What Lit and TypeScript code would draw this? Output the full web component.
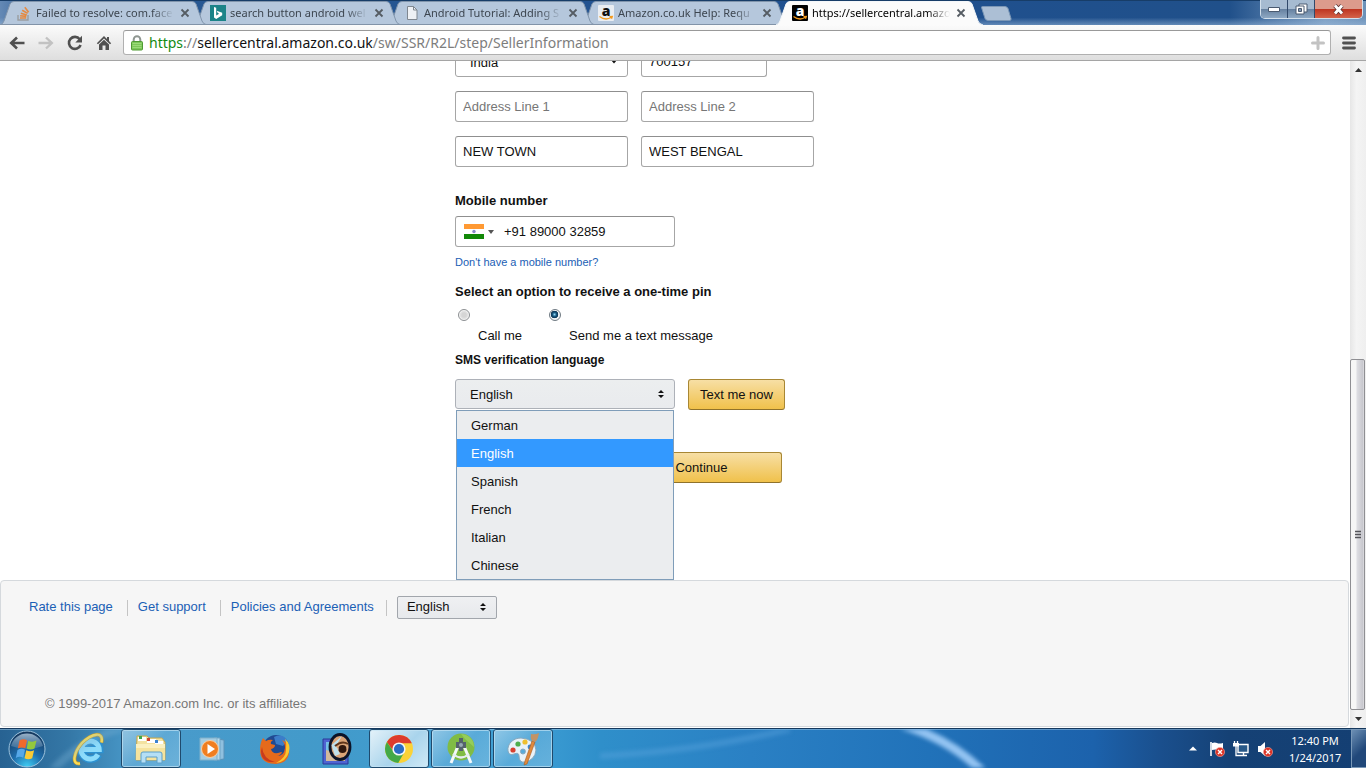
import { LitElement, html, svg, css, nothing } from "lit";
import { customElement, property } from "lit/decorators.js";
import { classMap } from "lit/directives/class-map.js";

const UI_FONT = css`"Noto Sans", "Open Sans", sans-serif`;

/* ---------- favicons ---------- */
const stackIcon = svg`<svg width="16" height="16" viewBox="0 0 16 16" fill="none">
  <path d="M2 10v5h10v-5" stroke="#9a9da0" stroke-width="1.4"/>
  <path d="M4 13h6.200M4.100 10.800l6.200.6M4.800 8.200l6 1.700M6.200 5.200l5.400 3.200M8.800 2.200l3.800 5" stroke="#e58a42" stroke-width="1.600"/>
</svg>`;
const bingIcon = svg`<svg width="16" height="16" viewBox="0 0 16 16">
  <rect width="16" height="16" fill="#1b8388"/>
  <path d="M4 2l2.200.8v7.700l3-1.700-1.500-.8-1-2.300 5.500 2v2.600L6.200 14 4 12.600z" fill="#fff"/>
</svg>`;
const fileIcon = svg`<svg width="16" height="16" viewBox="0 0 16 16">
  <path d="M3.500 1.500h6l3.500 3.500v9.500h-9.500z" fill="#eef1f5" stroke="#7f8790"/>
  <path d="M9.500 1.500v3.500h3.500" fill="none" stroke="#7f8790"/>
</svg>`;
const amazonIcon = (bg: string, fg: string) => svg`<svg width="16" height="16" viewBox="0 0 16 16">
  <rect width="16" height="16" rx="1" fill=${bg}/>
  <text x="8" y="10.500" text-anchor="middle" font-family="Open Sans, sans-serif" font-weight="800" font-size="14" fill=${fg}>a</text>
  <path d="M1.500 11.500q6 4.500 12 .8M11.500 11.700l2.800-.2-.8 2.200" fill="none" stroke="#f29a1f" stroke-width="1.300"/>
</svg>`;

/* ---------- toolbar glyphs ---------- */
const backIcon = svg`<svg width="16" height="14" viewBox="0 0 16 14"><path d="M8 1.500L2.200 7 8 12.500M2.500 7H15.500" fill="none" stroke="#505050" stroke-width="2.600"/></svg>`;
const forwardIcon = svg`<svg width="16" height="14" viewBox="0 0 16 14"><path d="M8 1.500L13.800 7 8 12.500M13.500 7H.5" fill="none" stroke="#c2c2c2" stroke-width="2.400"/></svg>`;
const reloadIcon = svg`<svg width="16" height="16" viewBox="0 0 16 16"><path d="M12.700 4.200A6 6 0 1 0 13.600 10" fill="none" stroke="#505050" stroke-width="2.600"/><path d="M15 .8v6.700H8.300z" fill="#505050"/></svg>`;
const homeIcon = svg`<svg width="16" height="16" viewBox="0 0 16 16"><path d="M8 1L.8 8.200l1.200 1L8 3.400l6 5.800 1.200-1-2.200-2.200V2h-2v2z" fill="#505050"/><path d="M3 9.500L8 4.800l5 4.700V15H9.500v-4.500h-3V15H3z" fill="#505050"/></svg>`;
const lockIcon = svg`<svg width="12" height="16" viewBox="0 0 12 16">
  <path d="M2.700 8V4.500a3.300 3.300 0 0 1 6.600 0V8" fill="none" stroke="#8f9691" stroke-width="2"/>
  <rect x=".5" y="6.500" width="11" height="8.500" rx="1" fill="#7cc65a" stroke="#4e9a33"/>
  <path d="M1.500 8.500h9M1.500 10.500h9M1.500 12.500h9" stroke="#9bdb78"/>
</svg>`;
const plusIcon = svg`<svg width="14" height="14" viewBox="0 0 14 14"><path d="M7 1.500v11M1.500 7h11" stroke="#c3c3c3" stroke-width="3" stroke-linecap="round"/></svg>`;
const menuIcon = svg`<svg width="14" height="14" viewBox="0 0 14 14"><path d="M1.500 2h11M1.500 7h11M1.500 12h11" stroke="#505050" stroke-width="2.800" stroke-linecap="round"/></svg>`;

/* ---------- taskbar icons ---------- */
const startOrb = svg`<svg width="38" height="38" viewBox="0 0 38 38">
  <defs>
    <radialGradient id="orb" cx=".5" cy="1" r=".95"><stop offset="0" stop-color="#3fd0f5"/><stop offset=".45" stop-color="#1f6fae"/><stop offset="1" stop-color="#16395f"/></radialGradient>
    <linearGradient id="gloss" x1="0" y1="0" x2="0" y2="1"><stop offset="0" stop-color="#c5d9ea"/><stop offset="1" stop-color="#6f96b8" stop-opacity=".5"/></linearGradient>
  </defs>
  <circle cx="19" cy="19" r="18" fill="url(#orb)" stroke="#9dc3dd"/>
  <path d="M3 16a16.500 16.500 0 0 1 32 0q-16 6-32 0z" fill="url(#gloss)" opacity=".75"/>
  <path d="M11.500 10.500q4-2.500 7.500-.3l-1.700 8q-4-1.800-7.500.4z" fill="#f0692c"/>
  <path d="M20.300 10.700q4 2 8.200-.2l-2 8q-4 2-7.800 0z" fill="#93c83d"/>
  <path d="M9.500 20q3.700-2.300 7.500-.3l-1.800 8q-3.500-2-7.400.3z" fill="#56a8e8"/>
  <path d="M18.300 20.200q4 2 7.800 0l-1.900 8q-4 2-7.700 0z" fill="#fbcb35"/>
</svg>`;
const ieIcon = svg`<svg width="34" height="34" viewBox="0 0 34 34">
  <path d="M26.500 22.500a9.200 9.200 0 1 1 1.200-5H11" fill="none" stroke="#2c92d2" stroke-width="7.600"/>
  <path d="M26 22.500a9 9 0 1 1 1.200-5H11" fill="none" stroke="#8ddcfb" stroke-width="5"/>
  <path d="M29.500 10.500C32-1 20 1 10 11 2 20-1 33 8 31.500" fill="none" stroke="#c79a1e" stroke-width="3.600"/>
  <path d="M29.500 10.500C32-1 20 1 10 11 2 20-1 33 8 31.500" fill="none" stroke="#fbdc57" stroke-width="2.400"/>
</svg>`;
const folderIcon = svg`<svg width="34" height="32" viewBox="0 0 34 32">
  <path d="M3 3h10l2 2h13l3 4v18H2z" fill="#f3e2a0" stroke="#c5a852"/>
  <path d="M4 4h8v4H4zM13 6h9v4h-9zM21 8h8v4h-8z" fill="#fff"/>
  <path d="M5 3h3v3H5z" fill="#3ca84a"/><path d="M13 5h3v3h-3z" fill="#cf4433"/><path d="M21 7h3v3h-3z" fill="#3c82cf"/>
  <path d="M2 11h29v16H2z" fill="#f6e39d"/><path d="M2 11h29v4H2z" fill="#fbf0c0"/>
  <path d="M7 30v-9q0-2 2-2h17q2 0 2 2v9h-5v-6H12v6z" fill="#b5dff5" stroke="#5c9fc9"/>
</svg>`;
const playerIcon = svg`<svg width="30" height="28" viewBox="0 0 30 28">
  <path d="M19 4l7 1v19l-7 1z" fill="#8fc0df" stroke="#5a92b8"/><path d="M16 3h6v22h-6z" fill="#b4d8ea" stroke="#6fa4c5"/>
  <path d="M2 3h17v22H2z" fill="#a5cde2" stroke="#80b0ca"/>
  <circle cx="12" cy="14" r="8.500" fill="#f07e20" stroke="#f9d0a5"/><path d="M9.500 9l7.500 5-7.500 5z" fill="#fff"/>
</svg>`;
const firefoxIcon = svg`<svg width="32" height="32" viewBox="0 0 32 32">
  <circle cx="17" cy="15" r="13" fill="#204a92"/><path d="M15 4q8-4 13 3l-4 6-7-2z" fill="#3c7dc9"/>
  <path d="M4 5l3 3q3-2 7-1-3 2-2 4l4 1q0 3-4 4 1 5 7 4 3-1 4-1-1 3-5 4 7 0 8-8 0-5-3-8 7 3 7 11 0 12-13 13Q1 31 1 17 1 10 4 5z" fill="#e66a1c"/>
  <path d="M26 6q6 5 4 13-3 10-13 11 10-5 10-13 1-6-1-11z" fill="#fbc62e"/>
  <path d="M3 14q1 12 13 15Q2 30 2 18z" fill="#c93b1d"/>
</svg>`;
const viewerIcon = svg`<svg width="34" height="34" viewBox="0 0 34 34">
  <path d="M3 7h25v25H3z" fill="#4f64d2" stroke="#2a3998"/><path d="M6 10h19v19H6z" fill="#74c1e6"/><path d="M6 18l8 2 11-5v14H6z" fill="#d3b99b"/>
  <ellipse cx="20" cy="15" rx="10" ry="12.500" fill="#d9a377" stroke="#0c1428" stroke-width="2.800"/>
  <path d="M11.500 13L22 4l-6 10 4 8-5 2z" fill="#bfe0ec"/>
  <path d="M17 17q5-4 10-1-3 5-10 1z" fill="#f3e4d6"/><circle cx="22.500" cy="17" r="4" fill="#30170d"/>
  <path d="M15 14q7-6 13-2" fill="none" stroke="#5f351b" stroke-width="2"/>
</svg>`;
const chromeIcon = svg`<svg width="30" height="30" viewBox="0 0 30 30">
  <circle cx="15" cy="15" r="14" fill="#fbd237"/>
  <path d="M2.900 8A14 14 0 0 1 27.800 9.200H15L9.600 17.500z" fill="#dd3b2d"/>
  <path d="M2.900 8A14 14 0 0 0 14.200 29l6-10.500-10.500-.5z" fill="#43a947"/>
  <circle cx="15" cy="15" r="6.600" fill="#f3f6f8"/><circle cx="15" cy="15" r="5.100" fill="#2b6cc4"/>
</svg>`;
const studioIcon = svg`<svg width="30" height="32" viewBox="0 0 30 32">
  <circle cx="15" cy="14" r="13.500" fill="#80bc45"/><path d="M15 1a13 13 0 0 1 13 13L19 6z" fill="#95cd5a"/>
  <path d="M12 13L5 30M18 13l7 17" stroke="#f4f8fa" stroke-width="3"/>
  <path d="M7 21q8 7 16 0" fill="none" stroke="#e6eef2" stroke-width="2.200"/>
  <path d="M13 5h4v4h3v6h-3v3h-4v-3h-3V9h3z" fill="#55636c"/><circle cx="15" cy="12" r="2" fill="#97a9b3"/>
</svg>`;
const paintIcon = svg`<svg width="34" height="34" viewBox="0 0 34 34">
  <path d="M15 6C7 6 1 12 2 19q1 5 6 3 5-2 5 2 0 7 6 6 10-2 11-12Q29 7 15 6zM17 17a2.500 2.500 0 1 1-.1 5 2.500 2.500 0 0 1 .1-5z" fill="#e9f2f8" stroke="#87a8bd" fill-rule="evenodd"/>
  <circle cx="7" cy="18" r="2.600" fill="#d8402f"/><circle cx="12" cy="12" r="2.600" fill="#4fae4c"/><circle cx="19" cy="10" r="2.600" fill="#efc02f"/><circle cx="24" cy="15" r="2.400" fill="#3b86cf"/>
  <path d="M26 9l3 1-8 22-3 1 1-4z" fill="#e0893c" stroke="#a85c20" stroke-width=".6"/>
  <path d="M25 2q4 1 8-1-1 7-4 9l-3-1q-2-3-1-7z" fill="#c29365"/>
</svg>`;

/* ---------- tray icons ---------- */
const redBadge = (x: number) => svg`<circle cx=${x} cy="12" r="4.600" fill="#dd3426" stroke="#f3a89f" stroke-width=".6"/><path d="M${x - 2} 10l4 4m0-4l-4 4" stroke="#fff" stroke-width="1.400"/>`;
const trayArrow = svg`<svg width="8" height="5" viewBox="0 0 8 5"><path d="M0 4.500L4 .5l4 4z" fill="#fff"/></svg>`;
const flagIcon = svg`<svg width="16" height="18" viewBox="0 0 16 18"><path d="M2 2v14" stroke="#fff" stroke-width="1.600"/><path d="M3 3q3-1 5 0t6 0v7q-3 1-5 0t-6 0z" fill="#fff"/>${redBadge(11)}</svg>`;
const networkIcon = svg`<svg width="16" height="18" viewBox="0 0 16 18"><path d="M5 4.500h10v8H5zM7 15.500h7M10.500 12.500v3" fill="#285989" stroke="#fff" stroke-width="1.400"/><path d="M0 3h6v3.500H0z" fill="#fff"/><path d="M1.500 1v3M4.500 1v3M3 6v9.500h4" fill="none" stroke="#fff" stroke-width="1.300"/></svg>`;
const soundIcon = svg`<svg width="16" height="18" viewBox="0 0 16 18"><path d="M1 6v6h2.500L8 16V2L3.500 6z" fill="#fff"/>${redBadge(11)}</svg>`;

const sortArrows = svg`<svg width="6" height="8" viewBox="0 0 6 8"><path d="M0 3l3-3 3 3zM0 5l3 3 3-3z" fill="#111"/></svg>`;
const downArrow = svg`<svg width="6" height="4" viewBox="0 0 6 4"><path d="M0 0h6L3 3.500z" fill="#111"/></svg>`;
const flagIndia = svg`<svg width="20" height="15" viewBox="0 0 20 15"><path d="M0 0h20v5H0z" fill="#f93"/><path d="M0 5h20v5H0z" fill="#fff"/><path d="M0 10h20v5H0z" fill="#128807"/><circle cx="10" cy="7.500" r="1.700" fill="#8a8ac9"/></svg>`;

/* ---------- browser chrome ---------- */
@customElement("browser-tab")
class BrowserTab extends LitElement {
  @property() label = "";
  @property({ attribute: false }) icon: unknown = nothing;
  @property({ type: Boolean, reflect: true }) active = false;
  static styles = css`
    :host { display: grid; width: 207px; height: 25px; flex: 0 1 207px; min-width: 60px; margin-right: -13px; position: relative; }
    .shape, .content { grid-area: 1 / 1; min-width: 0; }
    .shape { width: 100%; height: 25px; display: block; }
    .content { display: flex; align-items: center; padding: 1px 17px 0 16px; font: 11px/16px ${UI_FONT}; color: #3d4650; }
    :host([active]) .content { color: #000; }
    .icon { display: flex; flex: none; margin-right: 4px; }
    .label { flex: 1; overflow: hidden; white-space: nowrap; -webkit-mask-image: linear-gradient(90deg, #000 84%, transparent); mask-image: linear-gradient(90deg, #000 84%, transparent); }
    button { border: 0; background: none; padding: 0; margin-left: 6px; width: 10px; height: 10px; display: flex; }
  `;
  render() {
    const fill = this.active ? "#fbfbfb" : "#b5c7dc";
    return html`
      <svg class="shape" viewBox="0 0 207 25" preserveAspectRatio="none">
        <path d="M0 25Q3 24 4 21L10 4Q11 1.500 14 1.500H192Q195 1.500 196 4L202 21Q203 24 207 25" fill=${fill} stroke=${this.active ? "#f4f7fa" : "#8195ac"}></path>
        ${this.active ? nothing : svg`<path d="M0 24.500H207" stroke="#8193a8"/>`}
      </svg>
      <div class="content">
        <span class="icon">${this.icon}</span>
        <span class="label">${this.label}</span>
        <button aria-label="Close tab"><svg width="10" height="10" viewBox="0 0 10 10"><path d="M1.500 1.500l7 7m0-7l-7 7" stroke="#555c63" stroke-width="1.800"></path></svg></button>
      </div>`;
  }
}

@customElement("browser-frame")
class BrowserFrame extends LitElement {
  static styles = css`
    :host { display: block; flex: none; }
    .title { display: flex; height: 25px; background: linear-gradient(180deg, transparent 70%, #9dbbdc88 100%), linear-gradient(90deg, #6489b5 0, #2a5a93 3%, #1f5090 60%, #20508a 90%, #7d9fc3 97%, #6c91b8 100%); box-shadow: inset 0 1px #173d68; }
    .tabs { display: flex; flex: 1; min-width: 0; }
    .tabs browser-tab:nth-child(1) { z-index: 4; }
    .tabs browser-tab:nth-child(2) { z-index: 3; }
    .tabs browser-tab:nth-child(3) { z-index: 2; }
    .tabs browser-tab:nth-child(4) { z-index: 1; }
    .tabs browser-tab[active] { z-index: 5; }
    .new { border: 0; padding: 0; background: none; display: flex; align-self: flex-start; margin: 6px 0 0 11px; }
    .window { display: flex; align-self: flex-start; margin-right: 3px; height: 18px; border: 1px solid #d3e0ec; border-top: 0; border-radius: 0 0 5px 5px; overflow: hidden; }
    .window button { border: 0; border-right: 1px solid #31496a; padding: 0; width: 27px; display: grid; place-items: center; background: linear-gradient(#a6bbd1 0 48%, #65809f 50%, #8ea8c3); }
    .window .close { width: 47px; border-right: 0; background: linear-gradient(#dc9b8c 0 48%, #bd3420 50%, #d4634a); }
    .toolbar { display: flex; align-items: center; height: 36px; box-sizing: border-box; padding: 0 9px; border-bottom: 1px solid #a5a5a5; background: linear-gradient(#fbfbfb, #dedede); }
    .toolbar > button { border: 0; background: none; padding: 0; width: 16px; height: 16px; margin-right: 13px; display: grid; place-items: center; }
    .toolbar > .menu { margin: 0 0 0 10px; }
    .omni { display: flex; align-items: center; flex: 1; height: 25px; box-sizing: border-box; margin-left: -2px; padding: 0 5px 0 7px; border: 1px solid #b0b0b0; border-top-color: #999; border-radius: 3px; background: #fff; }
    .url { flex: 1; margin-left: 6px; font: 14px/22px ${UI_FONT}; color: #7d7d7d; white-space: nowrap; overflow: hidden; }
    .secure { color: #128a12; }
    .host { color: #111; }
    .star { border: 0; background: none; padding: 0; display: flex; }
  `;
  render() {
    return html`
      <header class="title">
        <div class="tabs">
          <browser-tab label="Failed to resolve: com.face" .icon=${stackIcon}></browser-tab>
          <browser-tab label="search button android wel" .icon=${bingIcon}></browser-tab>
          <browser-tab label="Android Tutorial: Adding S" .icon=${fileIcon}></browser-tab>
          <browser-tab label="Amazon.co.uk Help: Requ" .icon=${amazonIcon("#e9edf2", "#111")}></browser-tab>
          <browser-tab active label="https://sellercentral.amazo" .icon=${amazonIcon("#000", "#fff")}></browser-tab>
          <button class="new" aria-label="New tab"><svg width="31" height="15" viewBox="0 0 31 15"><path d="M1.500.5H24q2 0 3 2l3 10q.5 2-1.500 2H7q-2 0-3-2L.7 2Q0 .5 1.500.5z" fill="#acbfd5" stroke="#7c97b6"></path></svg></button>
        </div>
        <div class="window">
          <button aria-label="Minimise"><svg width="12" height="5" viewBox="0 0 12 5"><path d="M.5.5h11v4H.5z" fill="#fff" stroke="#4a5a70"></path></svg></button>
          <button aria-label="Restore"><svg width="13" height="12" viewBox="0 0 13 12"><path d="M4 1h8v8H4z" fill="#fff" stroke="#4a5a70"></path><path d="M1 3h8v8H1z" fill="#fff" stroke="#4a5a70"></path><path d="M3.500 5.500h3v3h-3z" fill="#8299b5" stroke="#4a5a70"></path></svg></button>
          <button class="close" aria-label="Close"><svg width="13" height="11" viewBox="0 0 13 11"><path d="M3 1.500l7 8m0-8l-7 8" stroke="#5c3434" stroke-width="4.400"></path><path d="M3 1.500l7 8m0-8l-7 8" stroke="#fff" stroke-width="2.800"></path></svg></button>
        </div>
      </header>
      <nav class="toolbar">
        <button aria-label="Back">${backIcon}</button>
        <button aria-label="Forward">${forwardIcon}</button>
        <button aria-label="Reload">${reloadIcon}</button>
        <button aria-label="Home">${homeIcon}</button>
        <div class="omni">
          ${lockIcon}
          <span class="url"><span class="secure">https</span>://<span class="host">sellercentral.amazon.co.uk</span>/sw/SSR/R2L/step/SellerInformation</span>
          <button class="star" aria-label="Add">${plusIcon}</button>
        </div>
        <button class="menu" aria-label="Menu">${menuIcon}</button>
      </nav>`;
  }
}

/* ---------- seller form ---------- */
@customElement("seller-form")
class SellerForm extends LitElement {
  static styles = css`
    :host { display: block; width: 440px; max-width: 100%; margin: 0 auto; padding-bottom: 97px; box-sizing: border-box; font: 13px/20px "Liberation Sans", Arial, sans-serif; color: #111; }
    input, select, button { font: inherit; color: inherit; box-sizing: border-box; margin: 0; }
    .address { display: grid; grid-template-columns: 173px 173px; align-items: end; gap: 14px 13px; }
    .text { width: 100%; height: 31px; padding: 0 7px; border: 1px solid #a6a6a6; border-top-color: #8f8f8f; border-radius: 3px; background: #fff; outline: 0; }
    .text::placeholder { color: #767676; opacity: 1; }
    .zip { width: 126px; }
    .pick { display: grid; align-items: center; height: 30px; }
    .pick select { grid-area: 1 / 1; width: 100%; height: 30px; appearance: none; padding: 2px 14px 0; border: 1px solid #a6a6a6; border-radius: 3px; background: #fff; }
    .pick svg { grid-area: 1 / 1; justify-self: end; margin-right: 11px; pointer-events: none; }
    .pick.grey select { background: linear-gradient(#eceeef, #e9ebee); border-color: #adb1b8; }
    h2 { font-size: 13px; line-height: 20px; margin: 0; }
    .mobile { margin-top: 24px; }
    .phone { display: flex; align-items: center; width: 220px; height: 31px; box-sizing: border-box; margin-top: 5px; padding-left: 8px; border: 1px solid #a6a6a6; border-top-color: #8f8f8f; border-radius: 3px; }
    .phone button { display: flex; align-items: center; gap: 4px; border: 0; padding: 0; background: none; }
    .phone input { flex: 1; min-width: 0; border: 0; padding: 1px 0 0 10px; background: none; outline: 0; }
    .none { display: block; margin: 6px 0 11px; font-size: 11px; line-height: 18px; color: #1b60b5; text-decoration: none; }
    .options { display: flex; gap: 27px; margin: 0 0 0 3px; padding: 0; border: 0; }
    .options label { display: grid; line-height: 20px; row-gap: 5px; padding-top: 7px; }
    .options span { padding-left: 20px; }
    .options input { appearance: none; width: 12px; height: 12px; border: 1px solid #8c8f92; border-radius: 50%; background: radial-gradient(#d5d5d5 30%, #e4e4e4 55%, #f6f6f6 66%); }
    .options input:checked { border-color: #6f7a82; background: radial-gradient(circle at 45% 45%, #8fd7f5 0, #16577f 25%, #0c3452 45%, #f2f4f5 52%); }
    .language { display: block; margin: 4px 0 9px; font-size: 12px; line-height: 20px; font-weight: 700; }
    .send { display: flex; gap: 13px; align-items: flex-start; }
    .drop { position: relative; width: 220px; }
    .list { position: absolute; z-index: 2; top: 31px; left: 1px; width: 218px; box-sizing: border-box; margin: 0; padding: 0; list-style: none; border: 1px solid #7f9db9; background: #ebedef; }
    .list li { padding: 2px 14px 0; line-height: 26px; }
    .list .on { background: #3399ff; color: #fff; }
    .gold { height: 31px; padding: 0 11px; border: 1px solid #a88734; border-bottom-color: #8f722b; border-radius: 3px; background: linear-gradient(#f7dfa5, #f0c14b); white-space: nowrap; }
    .go { display: block; width: 161px; margin: 42px 0 0 166px; }
  `;
  render() {
    const langs = ["German", "English", "Spanish", "French", "Italian", "Chinese"];
    return html`
      <div class="address">
        <span class="pick"><select aria-label="Country"><option>India</option></select>${downArrow}</span>
        <input class="text zip" aria-label="Postcode" value="700157">
        <input class="text" aria-label="Address Line 1" placeholder="Address Line 1">
        <input class="text" aria-label="Address Line 2" placeholder="Address Line 2">
        <input class="text" aria-label="City" value="NEW TOWN">
        <input class="text" aria-label="State" value="WEST BENGAL">
      </div>
      <h2 class="mobile"><label for="phone">Mobile number</label></h2>
      <div class="phone">
        <button aria-label="Country code">${flagIndia}<svg width="6" height="4" viewBox="0 0 6 4"><path d="M0 0h6L3 4z" fill="#555"></path></svg></button>
        <input id="phone" type="tel" value="+91 89000 32859">
      </div>
      <a class="none" href="#">Don't have a mobile number?</a>
      <h2 id="pin">Select an option to receive a one-time pin</h2>
      <div class="options" role="radiogroup" aria-labelledby="pin">
        <label><input type="radio" name="pin"><span>Call me</span></label>
        <label><input type="radio" name="pin" checked><span>Send me a text message</span></label>
      </div>
      <label class="language" for="lang">SMS verification language</label>
      <div class="send">
        <div class="drop">
          <span class="pick grey"><select id="lang">${langs.map((l) => html`<option ?selected=${l === "English"}>${l}</option>`)}</select>${sortArrows}</span>
          <ul class="list" role="listbox" aria-label="SMS verification language">
            ${langs.map((l) => html`<li role="option" class=${classMap({ on: l === "English" })}>${l}</li>`)}
          </ul>
        </div>
        <button class="gold">Text me now</button>
      </div>
      <button class="gold go">Continue</button>`;
  }
}

@customElement("page-footer")
class PageFooter extends LitElement {
  static styles = css`
    :host { display: block; flex: none; box-sizing: border-box; height: 147px; margin: 0 1px 1px 0; padding: 14px 28px 0; border: 1px solid #d5d9dd; border-radius: 4px; background: #f6f6f6; font: 13px/24px "Liberation Sans", Arial, sans-serif; }
    nav { display: flex; align-items: center; }
    a { color: #1b60b5; text-decoration: none; }
    a::after { content: ""; display: inline-block; height: 16px; margin: 0 10px 0 14px; border-left: 1px solid #c4c4c4; vertical-align: middle; }
    a:last-of-type::after { margin-left: 12px; }
    .pick { display: grid; align-items: center; width: 100px; }
    select { grid-area: 1 / 1; width: 100%; height: 23px; appearance: none; padding: 0 9px; border: 1px solid #a2a6ac; border-radius: 2px; background: linear-gradient(#eff0f2, #e7e9ec); font: inherit; line-height: 20px; color: #111; }
    .pick svg { grid-area: 1 / 1; justify-self: end; margin-right: 11px; pointer-events: none; }
    p { margin: 73px 0 0 16px; color: #767676; }
  `;
  render() {
    return html`
      <nav>
        <a href="#">Rate this page</a><a href="#">Get support</a><a href="#">Policies and Agreements</a>
        <span class="pick"><select aria-label="Language"><option>English</option></select>${sortArrows}</span>
      </nav>
      <p>© 1999-2017 Amazon.com Inc. or its affiliates</p>`;
  }
}

@customElement("scroll-bar")
class ScrollBar extends LitElement {
  static styles = css`
    :host { display: grid; grid-template-rows: 17px 281fr 351fr 18px; width: 16px; flex: none; background: linear-gradient(90deg, #e6e6e6, #f4f4f4 40%, #efefef); }
    .end { display: grid; place-items: center; }
    .thumb { grid-row: 3; display: grid; place-items: center; margin: 0 1px 0 0; border: 1px solid #8f8f93; border-radius: 2px; background: linear-gradient(90deg, #f6f6f6 0 35%, #dcdce1 50%, #c8c8ce 90%, #e0e0e4); }
    .end.last { grid-row: 4; }
  `;
  render() {
    return html`
      <span class="end"><svg width="7" height="4" viewBox="0 0 7 4"><path d="M0 4h7L3.500 0z" fill="#333"></path></svg></span>
      <span class="thumb"><svg width="6" height="9" viewBox="0 0 6 9"><path d="M0 1.500h6M0 4.500h6M0 7.500h6" stroke="#55555a" stroke-width="1.500"></path></svg></span>
      <span class="end last"><svg width="7" height="4" viewBox="0 0 7 4"><path d="M0 0h7L3.500 4z" fill="#333"></path></svg></span>`;
  }
}

@customElement("task-bar")
class TaskBar extends LitElement {
  static styles = css`
    :host { display: grid; flex: none; height: 40px; border-top: 1px solid #16385c; box-sizing: border-box; overflow: hidden; background: linear-gradient(90deg, #276292 0, #3477a6 5%, #4a9bcb 10%, #429aca 24%, #3fa0d5 38%, #2f8fca 44%, #2a80c4 55%, #2172b9 68%, #1c62ac 80%, #1a4f8d 85%, #154175 90%, #143f73 100%); }
    .swoosh, .row { grid-area: 1 / 1; min-width: 0; }
    .swoosh { width: 100%; height: 39px; filter: blur(2px); }
    .row { display: flex; align-items: stretch; box-shadow: inset 0 1px #9dc5e188; }
    button { border: 0; padding: 0; background: none; display: grid; place-items: center; }
    .start { width: 54px; }
    .apps { display: flex; gap: 2px; margin-left: 5px; flex: 1; }
    .apps button { width: 60px; box-sizing: border-box; border: 1px solid transparent; border-radius: 3px; }
    .apps .open { border-color: #1f4a6d; background: linear-gradient(135deg, #b9dcf0aa, #6fb4dd88 50%, #8dc6e688); box-shadow: inset 0 0 0 1px #c5e4f5aa; }
    .apps .front { background: linear-gradient(135deg, #f0f8fcee, #a9d4ec 55%, #cfe9f6); }
    .tray { display: flex; align-items: center; gap: 8px; }
    .tray button:first-child { margin-right: 4px; }
    .clock { margin: 0 10px 0 8px; text-align: center; color: #fff; font: 11px/17px ${UI_FONT}; width: 52px; white-space: nowrap; }
    .desk { width: 15px; box-sizing: border-box; border: 1px solid #7998b8; border-right: 0; background: linear-gradient(135deg, #6c8fb4, #21487a 60%); }
  `;
  render() {
    const apps: [string, unknown, string][] = [
      ["Internet Explorer", ieIcon, ""], ["Explorer", folderIcon, "open"], ["Media Player", playerIcon, ""],
      ["Firefox", firefoxIcon, ""], ["Photo Viewer", viewerIcon, ""], ["Chrome", chromeIcon, "open front"],
      ["Android Studio", studioIcon, "open"], ["Paint", paintIcon, "open"],
    ];
    return html`
      <svg class="swoosh" viewBox="0 0 1366 39" preserveAspectRatio="none">
        <path d="M902 -4Q950 10 984 44" fill="none" stroke="#94c4f2" stroke-width="9"></path>
        <path d="M600 27Q700 22 790 0" fill="none" stroke="#5aa5dd" stroke-width="6" opacity=".45"></path>
        <path d="M50 44Q80 10 130 -4" fill="none" stroke="#7fb4d8" stroke-width="8" opacity=".35"></path>
      </svg>
      <div class="row">
        <button class="start" aria-label="Start">${startOrb}</button>
        <div class="apps">${apps.map(([name, icon, cls]) => html`<button class=${cls} aria-label=${name}>${icon}</button>`)}</div>
        <div class="tray">
          <button aria-label="Hidden icons">${trayArrow}</button>
          <button aria-label="Action centre">${flagIcon}</button>
          <button aria-label="Network">${networkIcon}</button>
          <button aria-label="Volume">${soundIcon}</button>
          <time class="clock">12:40 PM<br>1/24/2017</time>
        </div>
        <button class="desk" aria-label="Show desktop"></button>
      </div>`;
  }
}

@customElement("app-root")
class AppRoot extends LitElement {
  static styles = css`
    :host { display: flex; flex-direction: column; height: 100vh; overflow: hidden; background: #fff; }
    .view { display: flex; flex: 1; min-height: 0; }
    .page { display: flex; flex-direction: column; justify-content: flex-end; flex: 1; min-width: 0; overflow: hidden; }
    seller-form { flex: none; }
  `;
  render() {
    return html`
      <browser-frame></browser-frame>
      <div class="view">
        <main class="page"><seller-form></seller-form><page-footer></page-footer></main>
        <scroll-bar></scroll-bar>
      </div>
      <task-bar></task-bar>`;
  }
}
